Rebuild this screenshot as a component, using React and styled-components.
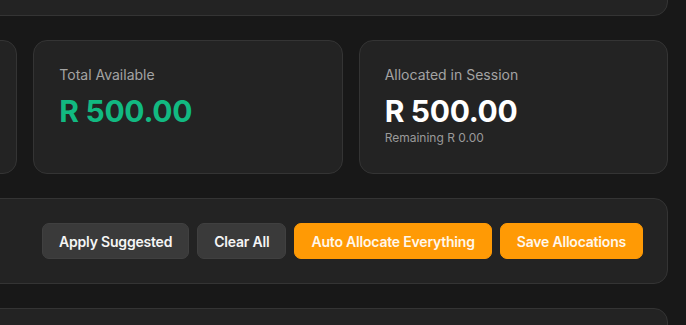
import styled, { createGlobalStyle } from "styled-components";

const GlobalStyle = createGlobalStyle`
  html, body {
    margin: 0;
    padding: 0;
    background: #181818;
    font-family: Inter, "Noto Sans", sans-serif;
    overflow: hidden;
  }
`;

const stats = [
  { label: "Total Budget", value: "R 500.00", tone: "plain" },
  { label: "Total Available", value: "R 500.00", tone: "green" },
  {
    label: "Allocated in Session",
    value: "R 500.00",
    tone: "plain",
    note: "Remaining R 0.00",
  },
];

const actions = [
  { text: "Apply Suggested", kind: "gray" },
  { text: "Clear All", kind: "gray" },
  { text: "Auto Allocate Everything", kind: "orange" },
  { text: "Save Allocations", kind: "orange" },
];

const App = () => {
  return (
    <>
      <GlobalStyle />
      <Column>
        <Panel $height={56} />
        <StatGrid>
          {stats.map((s) => (
            <StatCard key={s.label}>
              <StatLabel>{s.label}</StatLabel>
              <StatValue $tone={s.tone}>{s.value}</StatValue>
              {s.note && <StatNote>{s.note}</StatNote>}
            </StatCard>
          ))}
        </StatGrid>
        <ActionBar>
          {actions.map((a) => (
            <ActionButton key={a.text} $kind={a.kind} type="button">
              {a.text}
            </ActionButton>
          ))}
        </ActionBar>
        <Panel $height={80} />
      </Column>
    </>
  );
};
export default App;

const Column = styled.main`
  display: flex;
  flex-direction: column;
  gap: 24px;
  width: 960px;
  margin-left: -292px;
  margin-top: -40px;
`;

const Panel = styled.section`
  height: ${(props) => props.$height}px;
  box-sizing: border-box;
  background: #232323;
  border: 1px solid #343434;
  border-radius: 14px;
`;

const StatGrid = styled.div`
  display: grid;
  grid-template-columns: repeat(3, 1fr);
  gap: 16px;
`;

const StatCard = styled.div`
  display: flex;
  flex-direction: column;
  height: 134px;
  box-sizing: border-box;
  padding: 24px 25px;
  background: #232323;
  border: 1px solid #343434;
  border-radius: 14px;
`;

const StatLabel = styled.div`
  font-size: 14px;
  line-height: 20px;
  color: #a3a3a3;
  font-weight: 400;
`;

const StatValue = styled.div`
  margin-top: 8px;
  font-size: 30px;
  line-height: 36px;
  font-weight: 700;
  letter-spacing: -0.3px;
  color: ${(props) => (props.$tone === "green" ? "#12b981" : "#ffffff")};
`;

const StatNote = styled.div`
  margin-top: 1px;
  font-size: 12px;
  line-height: 16px;
  color: #9a9a9a;
`;

const ActionBar = styled.div`
  display: flex;
  justify-content: flex-end;
  align-items: center;
  gap: 8px;
  height: 86px;
  box-sizing: border-box;
  padding: 0 24px;
  background: #232323;
  border: 1px solid #343434;
  border-radius: 14px;
`;

const ActionButton = styled.button`
  height: 36px;
  padding: 0 16px;
  border-radius: 7px;
  font-family: Inter, "Noto Sans", sans-serif;
  font-size: 14px;
  font-weight: 600;
  letter-spacing: -0.2px;
  cursor: pointer;
  border: 1px solid
    ${(props) => (props.$kind === "orange" ? "#ff9a05" : "#404040")};
  background: ${(props) => (props.$kind === "orange" ? "#ff9a05" : "#3a3a3a")};
  color: ${(props) => (props.$kind === "orange" ? "#fff7ec" : "#f5f5f5")};
`;
